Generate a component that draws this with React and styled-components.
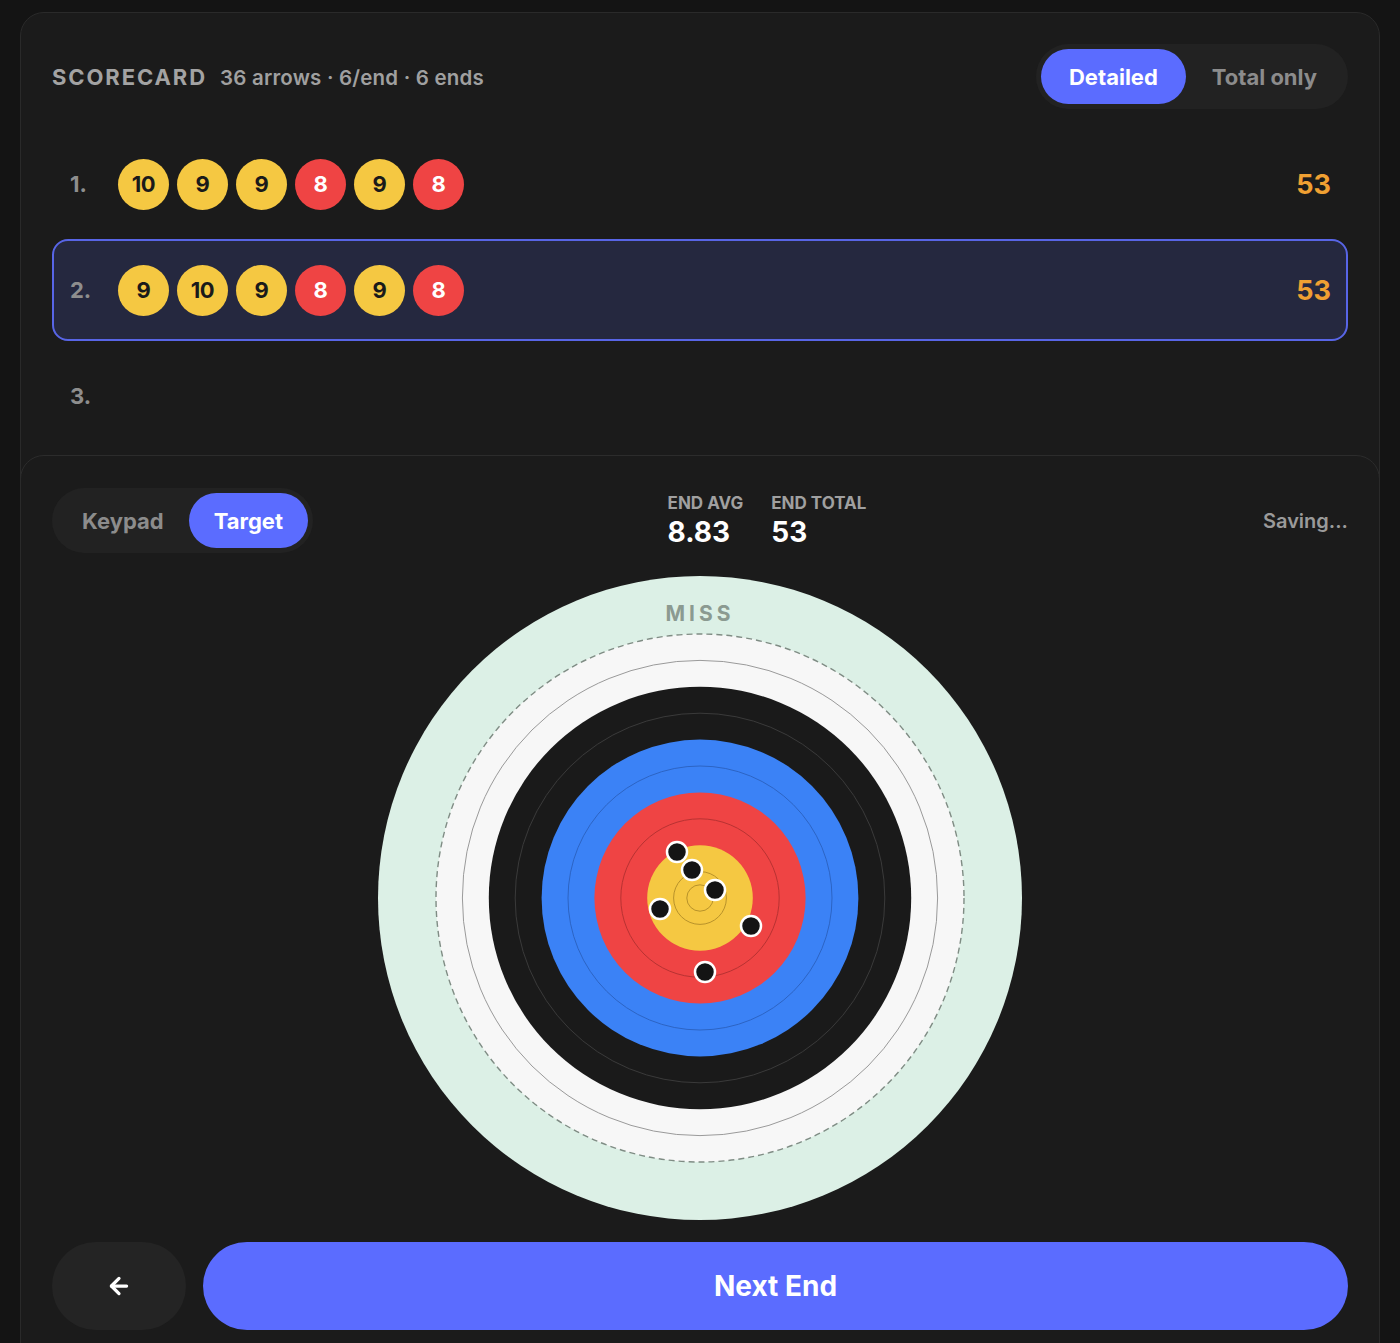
import React from 'react';
import styled, { createGlobalStyle } from 'styled-components';
import { ArrowLeft } from 'lucide-react';

const GlobalStyle = createGlobalStyle`
  html, body {
    margin: 0;
    padding: 0;
    background: #141414;
    font-family: Inter, "Noto Sans", sans-serif;
    overflow: hidden;
  }
`;

const Page = styled.div`
  padding: 12px 20px 0 20px;
  height: 1343px;
  box-sizing: border-box;
`;

const Card = styled.div`
  position: relative;
  background: #1b1b1b;
  border: 1px solid #2a2a2a;
  border-radius: 24px;
  height: 1400px;
  box-sizing: border-box;
  overflow: hidden;
`;

const Top = styled.div`
  padding: 31px 31px 0 31px;
`;

const Header = styled.div`
  display: flex;
  align-items: center;
  justify-content: space-between;
`;

const Title = styled.div`
  display: flex;
  align-items: baseline;
  gap: 13px;
`;

const Heading = styled.span`
  font-size: 22px;
  font-weight: 700;
  letter-spacing: 1.9px;
  color: #a3a3a3;
`;

const Meta = styled.span`
  font-size: 20.5px;
  font-weight: 600;
  letter-spacing: 0.2px;
  color: #a0a0a0;
`;

const Segmented = styled.div`
  display: flex;
  align-items: center;
  padding: 5px;
  background: #222222;
  border-radius: 999px;
`;

const Segment = styled.div`
  height: 55px;
  display: flex;
  align-items: center;
  justify-content: center;
  padding: 0 ${(p) => p.$pad || 24}px;
  border-radius: 999px;
  font-size: 22px;
  font-weight: 700;
  color: ${(p) => (p.$active ? '#ffffff' : '#8c8c8c')};
  background: ${(p) => (p.$active ? '#5b6cff' : 'transparent')};
`;

const List = styled.div`
  display: flex;
  flex-direction: column;
  gap: 4px;
  margin-top: 24px;
`;

const Row = styled.div`
  height: 102px;
  box-sizing: border-box;
  display: flex;
  align-items: center;
  padding: 0 15px 0 16px;
  border-radius: 16px;
  border: 2px solid ${(p) => (p.$current ? '#5865e6' : 'transparent')};
  background: ${(p) => (p.$current ? '#25283f' : 'transparent')};
`;

const RowNum = styled.span`
  width: 48px;
  font-size: 22px;
  font-weight: 700;
  color: #8e8e8e;
`;

const Arrows = styled.div`
  display: flex;
  gap: 8px;
  flex: 1;
`;

const Dot = styled.div`
  width: 51px;
  height: 51px;
  border-radius: 50%;
  display: flex;
  align-items: center;
  justify-content: center;
  font-size: 22px;
  font-weight: 700;
  letter-spacing: -0.5px;
  background: ${(p) => (p.$score >= 9 ? '#f5c842' : '#ef4444')};
  color: ${(p) => (p.$score >= 9 ? '#1a1a1a' : '#ffffff')};
`;

const Total = styled.span`
  font-size: 27px;
  font-weight: 700;
  color: #f0a032;
`;

const Sheet = styled.div`
  position: absolute;
  left: -1px;
  right: -1px;
  top: 442px;
  bottom: 0;
  background: #1b1b1b;
  border: 1px solid #2c2c2c;
  border-radius: 24px 24px 0 0;
  padding: 32px 31px 0 31px;
  display: flex;
  flex-direction: column;
`;

const Controls = styled.div`
  display: flex;
  align-items: center;
  justify-content: space-between;
`;

const Stats = styled.div`
  display: flex;
  gap: 28px;
  margin-left: -42px;
`;

const Stat = styled.div`
  display: flex;
  flex-direction: column;
  gap: 2px;
`;

const StatLabel = styled.span`
  font-size: 17px;
  font-weight: 700;
  color: #a0a0a0;
`;

const StatValue = styled.span`
  font-size: 28px;
  font-weight: 700;
  color: #ffffff;
`;

const Status = styled.span`
  font-size: 20px;
  font-weight: 600;
  color: #9a9a9a;
`;

const TargetWrap = styled.div`
  display: flex;
  justify-content: center;
  margin-top: 23px;
`;

const Actions = styled.div`
  display: flex;
  gap: 17px;
  margin-top: 22px;
`;

const BackButton = styled.button`
  width: 134px;
  height: 88px;
  border: none;
  border-radius: 44px;
  background: #242424;
  color: #ffffff;
  display: flex;
  align-items: center;
  justify-content: center;
`;

const NextButton = styled.button`
  flex: 1;
  height: 88px;
  border: none;
  border-radius: 44px;
  background: #5b6cff;
  color: #ffffff;
  font-family: inherit;
  font-size: 28px;
  font-weight: 700;
`;

const ends = [
  [10, 9, 9, 8, 9, 8],
  [9, 10, 9, 8, 9, 8],
  [],
];

const hits = [
  [677, 851],
  [692, 869],
  [715, 889],
  [660, 908],
  [751, 925],
  [705, 971],
];

const Target = () => {
  const c = 322;
  const w = 26.4;
  const zones = [
    { r: 10, fill: '#f7f7f7', line: '#9a9a9a' },
    { r: 8, fill: '#1a1a1a', line: '#3a3a3a' },
    { r: 6, fill: '#3b82f6', line: '#2c64c4' },
    { r: 4, fill: '#ef4444', line: '#b83232' },
    { r: 2, fill: '#f5c842', line: '#b8922a' },
  ];
  return (
    <svg width="644" height="644" viewBox="0 0 644 644">
      <circle cx={c} cy={c} r={322} fill="#dcf0e6" />
      <text
        x={c}
        y={45}
        textAnchor="middle"
        fontFamily="Inter, sans-serif"
        fontSize="21"
        fontWeight="700"
        letterSpacing="4"
        fill="#8b9a91"
      >
        MISS
      </text>
      {zones.map((z) => (
        <g key={z.r}>
          <circle cx={c} cy={c} r={z.r * w} fill={z.fill} />
          <circle
            cx={c}
            cy={c}
            r={(z.r - 1) * w}
            fill="none"
            stroke={z.line}
            strokeWidth="1"
          />
        </g>
      ))}
      <circle cx={c} cy={c} r={w / 2} fill="none" stroke="#b8922a" strokeWidth="1" />
      <circle
        cx={c}
        cy={c}
        r={10 * w}
        fill="none"
        stroke="#7f8c84"
        strokeWidth="1.4"
        strokeDasharray="6 4"
      />
      {hits.map(([x, y], i) => (
        <circle
          key={i}
          cx={x - 700 + c}
          cy={y - 897 + c}
          r="10"
          fill="#141414"
          stroke="#ffffff"
          strokeWidth="2.5"
        />
      ))}
    </svg>
  );
};

export default function App() {
  return (
    <>
      <GlobalStyle />
      <Page>
        <Card>
          <Top>
            <Header>
              <Title>
                <Heading>SCORECARD</Heading>
                <Meta>36 arrows · 6/end · 6 ends</Meta>
              </Title>
              <Segmented>
                <Segment $active $pad={28}>Detailed</Segment>
                <Segment $pad={26}>Total only</Segment>
              </Segmented>
            </Header>
            <List>
              {ends.map((end, i) => (
                <Row key={i} $current={i === 1}>
                  <RowNum>{i + 1}.</RowNum>
                  <Arrows>
                    {end.map((s, j) => (
                      <Dot key={j} $score={s}>
                        {s}
                      </Dot>
                    ))}
                  </Arrows>
                  {end.length > 0 && (
                    <Total>{end.reduce((a, b) => a + b, 0)}</Total>
                  )}
                </Row>
              ))}
            </List>
          </Top>
          <Sheet>
            <Controls>
              <Segmented>
                <Segment $pad={25}>Keypad</Segment>
                <Segment $active $pad={25}>Target</Segment>
              </Segmented>
              <Stats>
                <Stat>
                  <StatLabel>END AVG</StatLabel>
                  <StatValue>8.83</StatValue>
                </Stat>
                <Stat>
                  <StatLabel>END TOTAL</StatLabel>
                  <StatValue>53</StatValue>
                </Stat>
              </Stats>
              <Status>Saving...</Status>
            </Controls>
            <TargetWrap>
              <Target />
            </TargetWrap>
            <Actions>
              <BackButton>
                <ArrowLeft size={26} strokeWidth={3} />
              </BackButton>
              <NextButton>Next End</NextButton>
            </Actions>
          </Sheet>
        </Card>
      </Page>
    </>
  );
}
